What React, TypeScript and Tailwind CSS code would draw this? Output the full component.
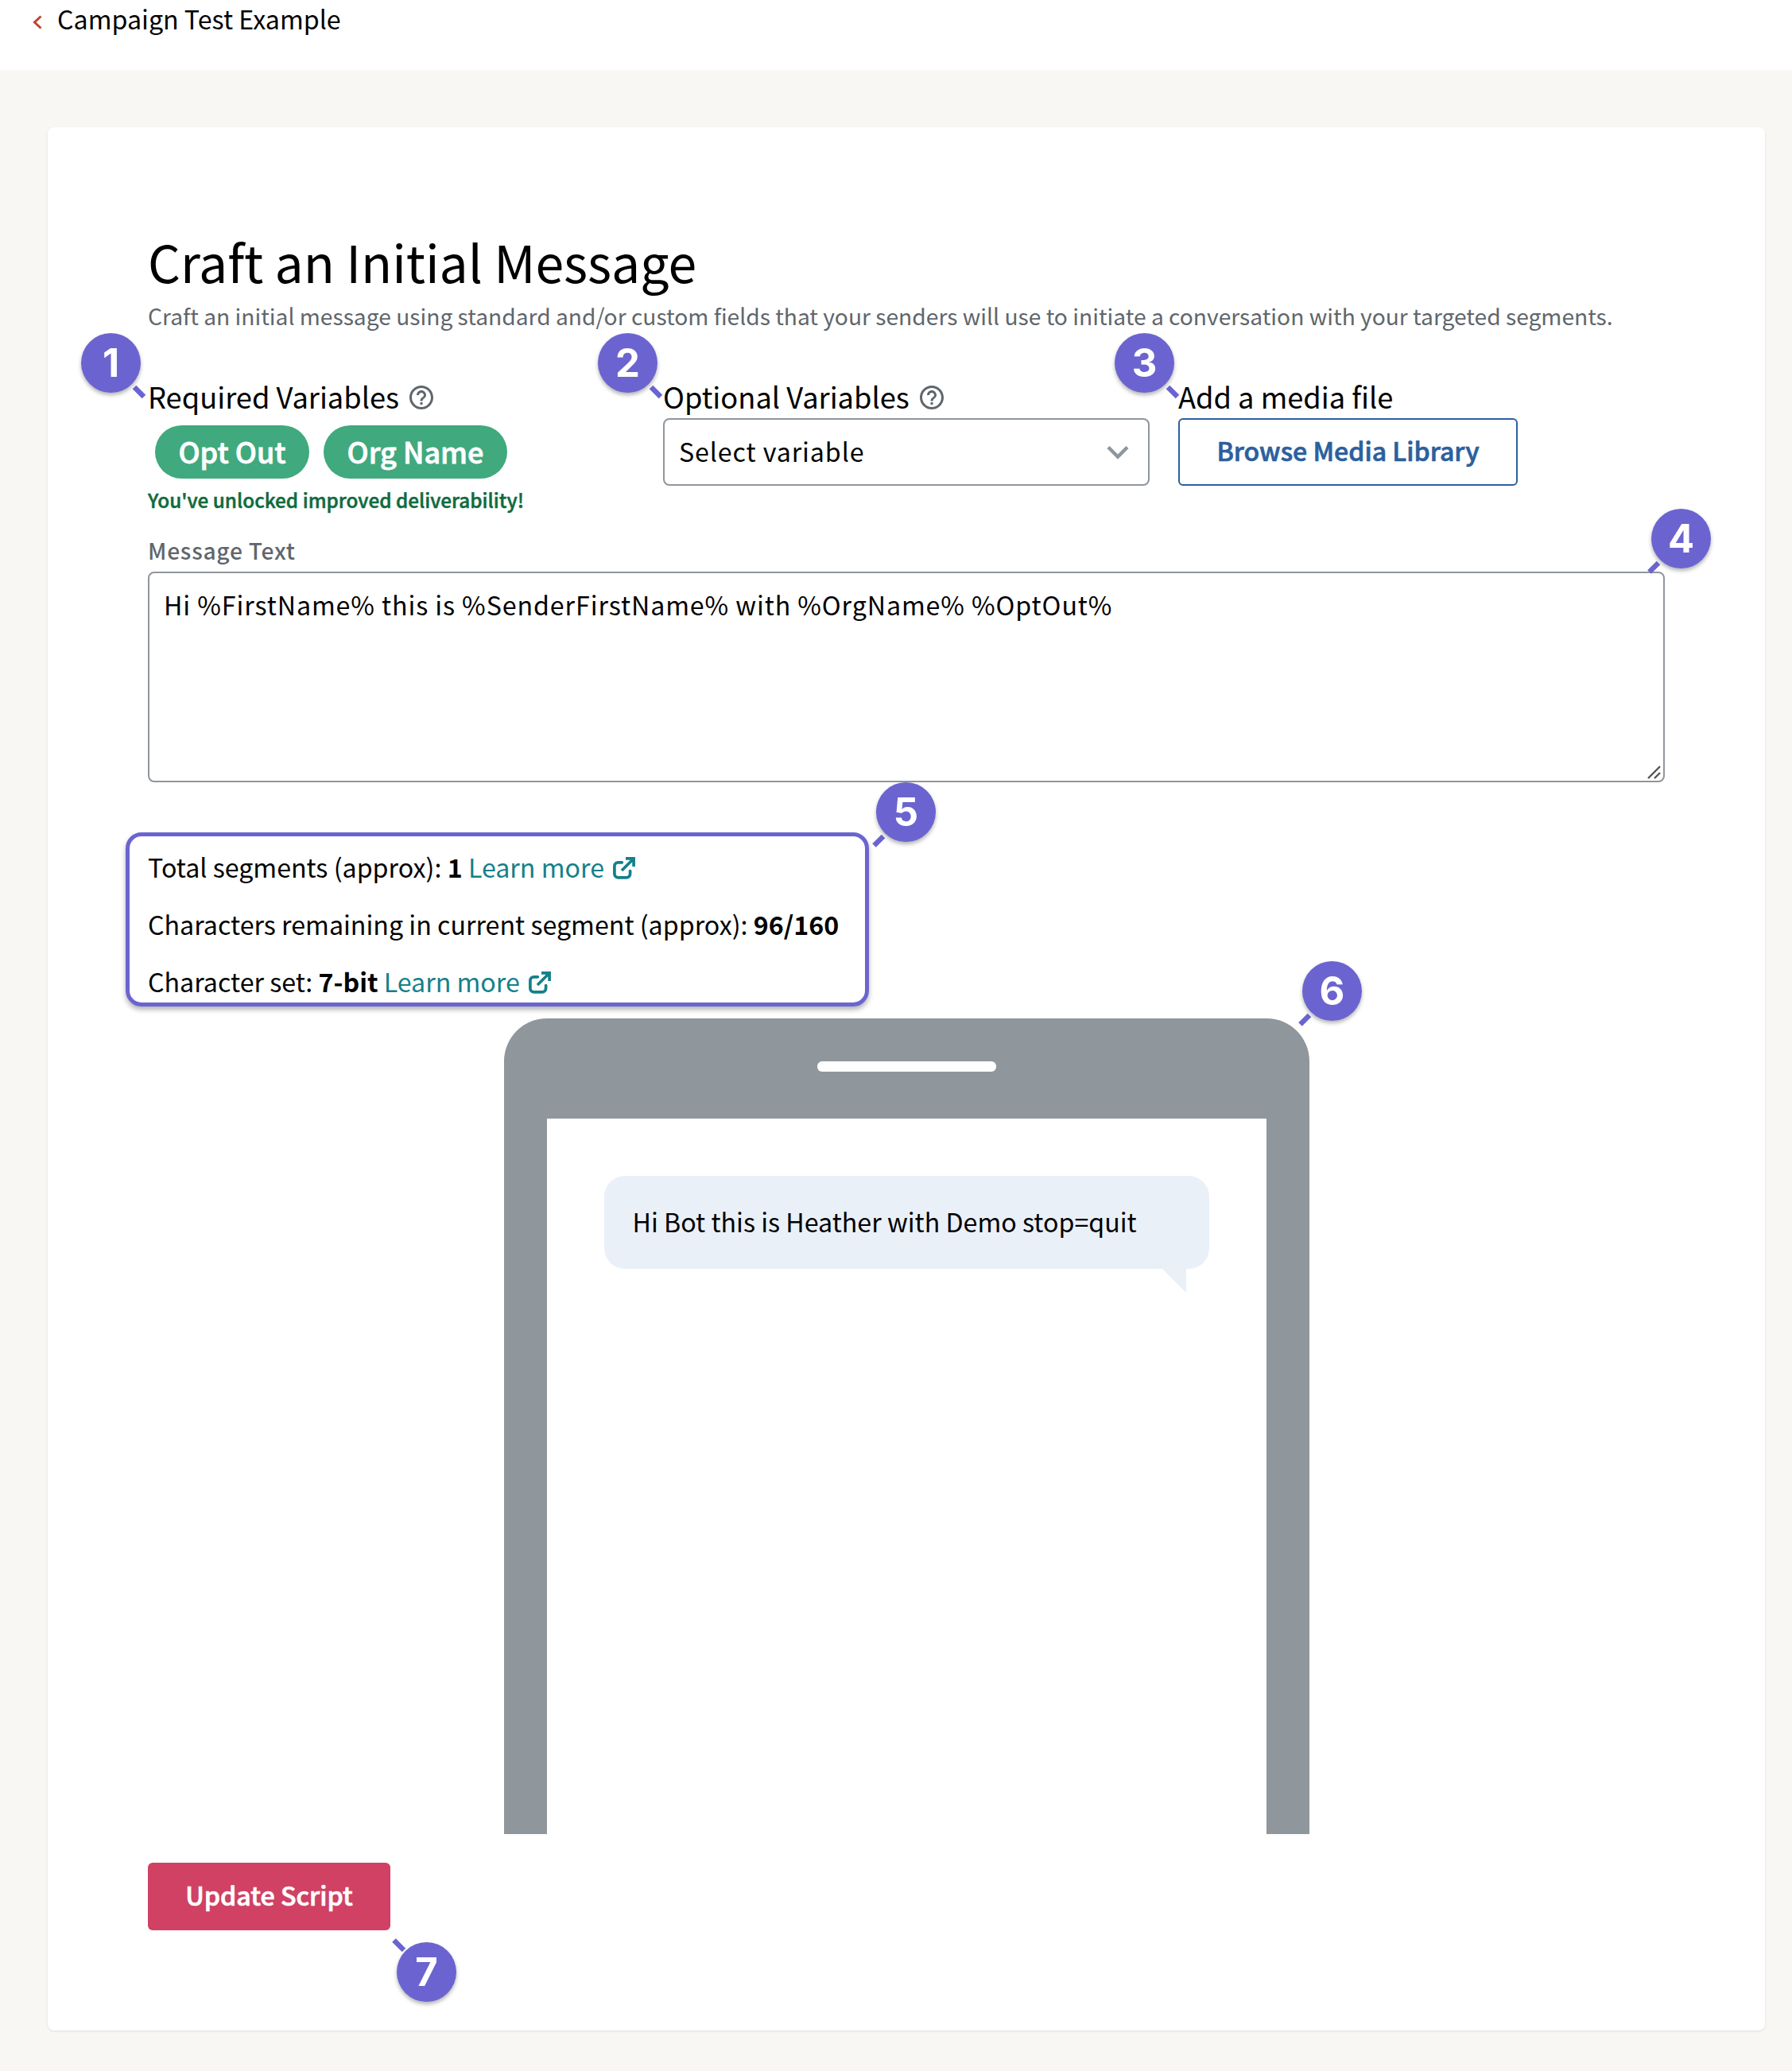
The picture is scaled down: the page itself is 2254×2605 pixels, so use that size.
import type { ReactNode } from 'react'

interface MarkerProps {
  n: number
  dir: 'se' | 'sw' | 'nw'
  className: string
}

const TICKS = {
  se: 'M89 90L101 102',
  sw: 'M31 90L19.500 101.500',
  nw: 'M31 32L18.500 19.500',
}

function Marker({ n, dir, className }: MarkerProps) {
  return (
    <div className={`absolute size-[75px] ${className}`}>
      <svg viewBox="0 0 120 120" className="absolute -top-[22px] -left-[22px] size-[120px]" fill="none" stroke="#6b64d0" strokeWidth="6.500">
        <path d={TICKS[dir]} />
      </svg>
      <div className="relative flex size-[75px] items-center justify-center rounded-full bg-[#6b64d0] font-['Inter',sans-serif] text-[49px] leading-none font-bold text-white shadow-[0_3px_5px_rgba(0,0,0,0.3)]">
        {n}
      </div>
    </div>
  )
}

function HelpIcon() {
  return (
    <svg viewBox="0 0 24 24" className="mt-[4px] size-[36px]" fill="#5f666c">
      <path d="M11 18h2v-2h-2v2zm1-16C6.480 2 2 6.480 2 12s4.480 10 10 10 10-4.480 10-10S17.520 2 12 2zm0 18c-4.410 0-8-3.590-8-8s3.590-8 8-8 8 3.590 8 8-3.590 8-8 8zm0-14c-2.210 0-4 1.790-4 4h2c0-1.100.9-2 2-2s2 .9 2 2c0 2-3 1.750-3 5h2c0-2.250 3-2.500 3-5 0-2.210-1.790-4-4-4z" />
    </svg>
  )
}

function ExternalIcon() {
  return (
    <svg viewBox="0 0 28 28" className="ml-[11px] inline-block size-[28px] align-[-2px]" fill="none" stroke="#14808a" strokeWidth="3.700">
      <path strokeLinecap="round" d="M11.300 6.800H6.500A4.600 4.600 0 0 0 1.900 11.400V21.200A4.600 4.600 0 0 0 6.500 25.800H17A4.600 4.600 0 0 0 21.600 21.200V17.500" />
      <path d="M16 1.900H26.100V12M25.500 2.500L11 17" />
    </svg>
  )
}

function Label({ children }: { children: ReactNode }) {
  return <div className="flex h-[54px] items-center gap-[10px] pb-[2px] text-[36.250px] whitespace-nowrap">{children}</div>
}

function LearnMore() {
  return (
    <a className="text-[#14808a]">
      Learn more
      <ExternalIcon />
    </a>
  )
}

export default function App() {
  return (
    <div className="h-[2605px] w-[2254px] overflow-hidden bg-[#f8f7f3] font-['Noto_Sans_CJK_SC',sans-serif] text-black">
      <header className="flex h-[88px] items-start bg-white pl-[41px]">
        <svg viewBox="0 0 12 18" className="mt-[19px] h-[18px] w-[12px]" fill="none" stroke="#c0432f" strokeWidth="3">
          <path d="M10.500 1.500L2.500 9L10.500 16.500" />
        </svg>
        <h1 className="ml-[19px] text-[32.200px] leading-[46px] whitespace-nowrap">Campaign Test Example</h1>
      </header>

      <main className="relative mt-[72px] ml-[60px] h-[2394px] w-[2160px] rounded-[8px] bg-white px-[126px] pt-[126px] shadow-[0_1px_3px_rgba(0,0,0,0.1)]">
        <h2 className="h-[90px] text-[64.300px] leading-[84px] tracking-[-0.060px] whitespace-nowrap">Craft an Initial Message</h2>
        <p className="h-[46px] text-[28.200px] leading-[41px] whitespace-nowrap text-[#5f666c]">
          Craft an initial message using standard and/or custom fields that your senders will use to initiate a conversation with your targeted segments.
        </p>

        <div className="mt-[50px] grid h-[207px] grid-cols-[648px_648px_1fr]">
          <div>
            <Label>
              Required Variables
              <HelpIcon />
            </Label>
            <div className="mt-[9px] flex gap-[18px] pl-[9px] text-[36px] leading-[64px] font-medium text-white [-webkit-text-stroke:0.8px]">
              <span className="flex h-[67px] w-[194px] justify-center rounded-full bg-[#40a97e]">Opt Out</span>
              <span className="flex h-[67px] w-[231px] justify-center rounded-full bg-[#40a97e]">Org Name</span>
            </div>
            <p className="mt-[8px] text-[24.300px] leading-[37px] font-medium whitespace-nowrap text-[#0f6b3d] [-webkit-text-stroke:0.5px]">
              You've unlocked improved deliverability!
            </p>
          </div>
          <div>
            <Label>
              Optional Variables
              <HelpIcon />
            </Label>
            <div className="flex h-[85px] w-[612px] items-center justify-between rounded-[8px] border-2 border-[#8f969c] pr-[24px] pl-[18px] text-[32.200px] tracking-[0.900px]">
              <span className="pb-[2px]">Select variable</span>
              <svg viewBox="0 0 28 18" className="h-[18px] w-[28px]" fill="none" stroke="#8f969c" strokeWidth="4.500">
                <path d="M2 2.500L14 14.500L26 2.500" />
              </svg>
            </div>
          </div>
          <div>
            <Label>Add a media file</Label>
            <button className="flex h-[85px] w-[427px] items-center justify-center rounded-[6px] border-2 border-[#2c5f9e] pb-[5px] text-[32.100px] font-medium text-[#2c5f9e] [-webkit-text-stroke:0.7px]">
              Browse Media Library
            </button>
          </div>
        </div>

        <label className="-mt-[8px] block h-[48px] text-[28.200px] leading-[42px] font-medium tracking-[0.750px] text-[#5f666c]">Message Text</label>
        <div className="relative h-[265px] w-[1908px] rounded-[8px] border-2 border-[#8f969c] px-[18px] pt-[14px] text-[32.200px] leading-[50px] tracking-[0.900px] whitespace-nowrap">
          Hi %FirstName% this is %SenderFirstName% with %OrgName% %OptOut%
          <svg viewBox="0 0 18 18" className="absolute right-[2px] bottom-[1px] size-[18px]" fill="none" stroke="#555" strokeWidth="2.400">
            <path d="M1 16L16 1M9 16L16 9" />
          </svg>
        </div>

        <div className="-ml-[28px] mt-[63px] h-[219px] w-[935px] rounded-[20px] border-5 border-[#6b64d0] pt-[2px] pl-[23px] text-[32.200px] leading-[72px] whitespace-nowrap shadow-[0_4px_6px_rgba(0,0,0,0.3)]">
          <p className="h-[72px]">Total segments (approx): <b>1</b> <LearnMore /></p>
          <p className="h-[72px]">Characters remaining in current segment (approx): <b>96/160</b></p>
          <p className="h-[72px]">Character set: <b>7-bit</b> <LearnMore /></p>
        </div>

        <div className="mx-auto mt-[15px] h-[1026px] w-[1013px] rounded-t-[54px] bg-[#8f969c] px-[54px] pt-[54px]">
          <div className="mx-auto h-[13px] w-[225px] rounded-[6px] bg-white" />
          <div className="mt-[59px] h-[900px] bg-white px-[72px] pt-[72px]">
            <div className="relative h-[117px] rounded-[26px] bg-[#eaf0f8] pl-[36px] text-[32.200px] leading-[114px] whitespace-nowrap">
              Hi Bot this is Heather with Demo stop=quit
              <svg viewBox="0 0 30 30" className="absolute right-[29px] -bottom-[30px] size-[30px]" fill="#eaf0f8">
                <path d="M0 0H30V30Z" />
              </svg>
            </div>
          </div>
        </div>

        <button className="mt-[36px] h-[85px] w-[305px] rounded-[6px] bg-[#d04164] pb-[5px] text-[32.200px] font-medium text-white [-webkit-text-stroke:0.7px]">Update Script</button>

        <Marker n={1} dir="se" className="top-[259px] left-[42px]" />
        <Marker n={2} dir="se" className="top-[259px] left-[692px]" />
        <Marker n={3} dir="se" className="top-[259px] left-[1342px]" />
        <Marker n={4} dir="sw" className="top-[480px] left-[2017px]" />
        <Marker n={5} dir="sw" className="top-[824px] left-[1042px]" />
        <Marker n={6} dir="sw" className="top-[1049px] left-[1578px]" />
        <Marker n={7} dir="nw" className="top-[2283px] left-[439px]" />
      </main>
    </div>
  )
}
